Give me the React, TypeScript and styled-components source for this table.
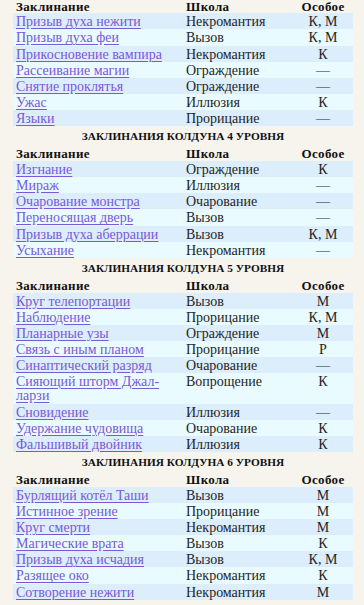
import React from "react"
import styled, { createGlobalStyle } from "styled-components"

type Spell = { name: string; school: string; special: string }
type Level = { level: number; spells: Spell[] }

const levels: Level[] = [
  {
    level: 3,
    spells: [
      { name: "Призыв духа нежити", school: "Некромантия", special: "К, М" },
      { name: "Призыв духа феи", school: "Вызов", special: "К, М" },
      { name: "Прикосновение вампира", school: "Некромантия", special: "К" },
      { name: "Рассеивание магии", school: "Ограждение", special: "—" },
      { name: "Снятие проклятья", school: "Ограждение", special: "—" },
      { name: "Ужас", school: "Иллюзия", special: "К" },
      { name: "Языки", school: "Прорицание", special: "—" },
    ],
  },
  {
    level: 4,
    spells: [
      { name: "Изгнание", school: "Ограждение", special: "К" },
      { name: "Мираж", school: "Иллюзия", special: "—" },
      { name: "Очарование монстра", school: "Очарование", special: "—" },
      { name: "Переносящая дверь", school: "Вызов", special: "—" },
      { name: "Призыв духа аберрации", school: "Вызов", special: "К, М" },
      { name: "Усыхание", school: "Некромантия", special: "—" },
    ],
  },
  {
    level: 5,
    spells: [
      { name: "Круг телепортации", school: "Вызов", special: "М" },
      { name: "Наблюдение", school: "Прорицание", special: "К, М" },
      { name: "Планарные узы", school: "Ограждение", special: "М" },
      { name: "Связь с иным планом", school: "Прорицание", special: "Р" },
      { name: "Синаптический разряд", school: "Очарование", special: "—" },
      { name: "Сияющий шторм Джал-ларзи", school: "Вопрощение", special: "К" },
      { name: "Сновидение", school: "Иллюзия", special: "—" },
      { name: "Удержание чудовища", school: "Очарование", special: "К" },
      { name: "Фальшивый двойник", school: "Иллюзия", special: "К" },
    ],
  },
  {
    level: 6,
    spells: [
      { name: "Бурлящий котёл Таши", school: "Вызов", special: "М" },
      { name: "Истинное зрение", school: "Прорицание", special: "М" },
      { name: "Круг смерти", school: "Некромантия", special: "М" },
      { name: "Магические врата", school: "Вызов", special: "К" },
      { name: "Призыв духа исчадия", school: "Вызов", special: "К, М" },
      { name: "Разящее око", school: "Некромантия", special: "К" },
      { name: "Сотворение нежити", school: "Некромантия", special: "М" },
    ],
  },
  { level: 7, spells: [] },
]

const GlobalStyle = createGlobalStyle`
  html, body {
    margin: 0;
    background: #f7f4ee;
    overflow: hidden;
  }
  body {
    font-family: "Liberation Serif", "Times New Roman", serif;
    color: #1c1c1c;
  }
`

export default function App() {
  return (
    <>
      <GlobalStyle />
      <S.Page>
        {levels.map((lvl, i) => (
          <S.Section key={lvl.level}>
            {i > 0 && <S.Heading>Заклинания колдуна {lvl.level} уровня</S.Heading>}
            {lvl.spells.length > 0 && <SpellTable spells={lvl.spells} first={i === 0} />}
          </S.Section>
        ))}
      </S.Page>
    </>
  )
}

const SpellTable: React.FC<{ spells: Spell[]; first?: boolean }> = ({ spells, first }) => (
  <S.Table>
    <colgroup>
      <col style={{ width: 170 }} />
      <col style={{ width: 110 }} />
      <col />
    </colgroup>
    <thead>
      <tr>
        <S.Th $first={first}>Заклинание</S.Th>
        <S.Th $first={first}>Школа</S.Th>
        <S.Th $first={first} $center>Особое</S.Th>
      </tr>
    </thead>
    <tbody>
      {spells.map((s) => (
        <S.Row key={s.name}>
          <S.Td>
            <S.Link href="#">{s.name}</S.Link>
          </S.Td>
          <S.Td>{s.school}</S.Td>
          <S.Td $center>{s.special}</S.Td>
        </S.Row>
      ))}
    </tbody>
  </S.Table>
)

const S = {
  Page: styled.div`
    display: flex;
    flex-direction: column;
    padding: 0 11px 0 13px;
  `,
  Section: styled.section`
    display: flex;
    flex-direction: column;
  `,
  Heading: styled.h4`
    margin: 0;
    height: 18px;
    line-height: 20px;
    text-align: center;
    text-transform: uppercase;
    font-size: 11.3px;
    font-weight: bold;
    color: #111;
  `,
  Table: styled.table`
    width: 340px;
    border-collapse: collapse;
    table-layout: fixed;
    font-size: 14px;
  `,
  Th: styled.th<{ $center?: boolean; $first?: boolean }>`
    height: ${(p) => (p.$first ? "13.3px" : "15.6px")};
    padding: ${(p) => (p.$first ? "0 3px" : "0 3px 1px")};
    font-size: 13px;
    letter-spacing: 0.35px;
    line-height: 12px;
    vertical-align: bottom;
    font-weight: bold;
    text-align: ${(p) => (p.$center ? "center" : "left")};
    color: #111;
  `,
  Row: styled.tr`
    &:nth-child(odd) {
      background: #dcedfc;
    }
    &:nth-child(even) {
      background: #e9fbfe;
    }
  `,
  Td: styled.td<{ $center?: boolean }>`
    padding: 2px 3px 0;
    line-height: 14.15px;
    vertical-align: top;
    text-align: ${(p) => (p.$center ? "center" : "left")};
    color: #1f1f1f;
  `,
  Link: styled.a`
    color: #7a58d8;
    text-decoration: underline;
    text-underline-offset: 2px;
  `,
}
